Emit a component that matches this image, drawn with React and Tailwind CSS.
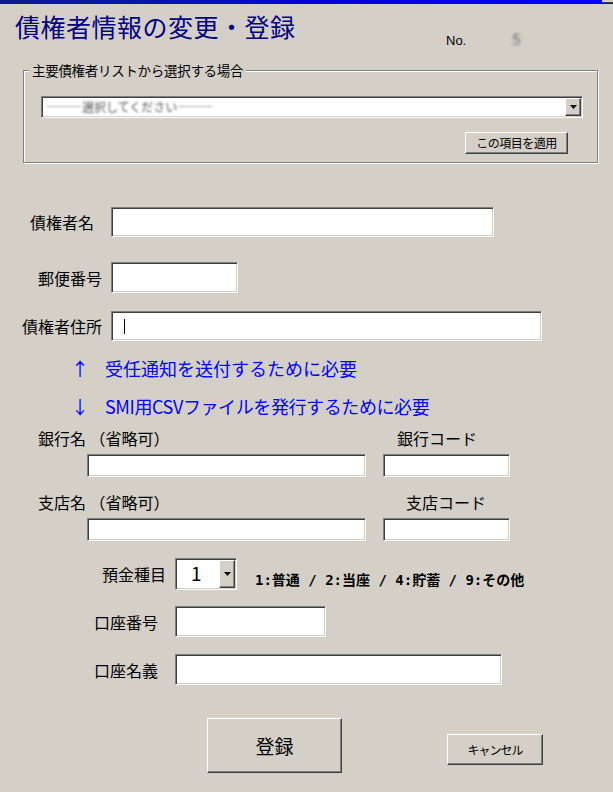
import React from 'react'

const sunken = 'bg-white border border-t-[#808080] border-l-[#808080] border-b-white border-r-white shadow-[inset_1px_1px_0_#404040,inset_-1px_-1px_0_#d4d0c8]'
const raised = 'bg-[#d4d0c8] border border-t-white border-l-white border-b-[#404040] border-r-[#404040] shadow-[inset_-1px_-1px_0_#808080]'

function Field({ className }) {
    return <div className={`${sunken} ${className}`} />
}

function DropButton({ className }) {
    return (
        <div className={`${raised} flex items-center justify-center ${className}`}>
            <svg width="7" height="4" viewBox="0 0 7 4">
                <path d="M0 0h7L3.5 4z" fill="#000" />
            </svg>
        </div>
    )
}

export default function App() {
    return (
        <div className="w-[613px] h-[792px] bg-[#d4d0c8] overflow-hidden text-black font-['Noto_Sans_CJK_JP',sans-serif]">
            {/* window caption edge */}
            <div className="h-[4px] flex bg-linear-to-r from-[#0a1a8a] via-[#0000d8] to-[#0000ff]">
                <div className="ml-auto w-[11px] h-[3px] bg-[#d4d0c8] border-b border-[#404040]" />
            </div>

            <div className="h-[66px] flex items-start">
                <h1 className="ml-[15px] w-[431px] mt-[10px] text-[25px] leading-[25px] text-[#000080] tracking-[0.5px]">
                    債権者情報の変更・登録
                </h1>
                <span className="mt-[30px] text-[13px] leading-[14px] font-['Liberation_Sans',sans-serif]">No.</span>
                <span className="ml-[46px] mt-[24px] text-[15px] text-[#666] blur-[1.5px]">5</span>
            </div>

            {/* group box */}
            <div className="relative ml-[23px] w-[575px] h-[93px] border border-[#808080] shadow-[inset_1px_1px_0_white,1px_1px_0_white]">
                <span className="absolute left-[5px] -top-[10px] px-[3px] bg-[#d4d0c8] text-[13.5px] leading-[18px] tracking-[-0.3px]">
                    主要債権者リストから選択する場合
                </span>
                <div className={`${sunken} mt-[25px] ml-[17px] w-[542px] h-[22px] flex items-center`}>
                    <span className="ml-[4px] text-[12px] text-[#555] blur-[1.3px]">―――選択してください―――</span>
                    <DropButton className="ml-auto mr-[1px] w-[16px] h-[18px]" />
                </div>
                <div className="flex justify-end mt-[14px] mr-[29px]">
                    <button className={`${raised} w-[103px] h-[22px] text-[12px] leading-[12px] tracking-[-0.5px]`}>
                        この項目を適用
                    </button>
                </div>
            </div>

            <div className="mt-[44px] flex items-center">
                <span className="ml-[30px] w-[81px] text-[16px] leading-[16px]">債権者名</span>
                <Field className="w-[383px] h-[30px]" />
            </div>
            <div className="mt-[25px] flex items-center">
                <span className="ml-[38px] w-[73px] text-[16px] leading-[16px]">郵便番号</span>
                <Field className="w-[127px] h-[31px]" />
            </div>
            <div className="mt-[18px] flex items-center">
                <span className="ml-[22px] w-[89px] text-[16px] leading-[16px]">債権者住所</span>
                <div className={`${sunken} w-[431px] h-[30px] flex items-center`}>
                    <div className="ml-[12px] w-px h-[15px] bg-black" />
                </div>
            </div>

            <div className="mt-[18px] flex text-[18px] leading-[18px] text-[#0000ff]">
                <span className="ml-[71px] w-[34px]">↑</span>
                <span>受任通知を送付するために必要</span>
            </div>
            <div className="mt-[20px] flex text-[18px] leading-[18px] text-[#0000ff]">
                <span className="ml-[71px] w-[34px]">↓</span>
                <span className="tracking-[-0.4px]">SMI用CSVファイルを発行するために必要</span>
            </div>

            <div className="mt-[15px] flex text-[16px] leading-[16px]">
                <span className="ml-[38px] w-[359px]">銀行名 （省略可）</span>
                <span>銀行コード</span>
            </div>
            <div className="mt-[8px] flex">
                <Field className="ml-[87px] w-[279px] h-[23px]" />
                <Field className="ml-[17px] w-[127px] h-[23px]" />
            </div>

            <div className="mt-[17px] flex text-[16px] leading-[16px]">
                <span className="ml-[38px] w-[368px]">支店名 （省略可）</span>
                <span>支店コード</span>
            </div>
            <div className="mt-[8px] flex">
                <Field className="ml-[87px] w-[279px] h-[23px]" />
                <Field className="ml-[17px] w-[127px] h-[23px]" />
            </div>

            <div className="mt-[17px] flex items-center">
                <span className="ml-[102px] w-[73px] text-[16px] leading-[16px]">預金種目</span>
                <div className={`${sunken} w-[62px] h-[32px] flex items-center`}>
                    <span className="ml-[15px] text-[19px] leading-[19px] -mt-[3px]">1</span>
                    <DropButton className="ml-auto mr-[1px] w-[16px] h-[28px]" />
                </div>
                <span className="ml-[18px] self-end mb-[2px] text-[14px] leading-[15px] font-bold font-['DejaVu_Sans_Mono','Noto_Sans_CJK_JP',monospace]">
                    1:普通 / 2:当座 / 4:貯蓄 / 9:その他
                </span>
            </div>

            <div className="mt-[16px] flex items-center">
                <span className="ml-[94px] w-[81px] text-[16px] leading-[16px]">口座番号</span>
                <Field className="w-[151px] h-[31px]" />
            </div>
            <div className="mt-[17px] flex items-center">
                <span className="ml-[94px] w-[81px] text-[16px] leading-[16px]">口座名義</span>
                <Field className="w-[327px] h-[31px]" />
            </div>

            <div className="mt-[33px] flex items-start">
                <button className={`${raised} ml-[207px] w-[135px] h-[55px] text-[19px] leading-[19px]`}>
                    登録
                </button>
                <button className={`${raised} ml-[105px] mt-[16px] w-[96px] h-[31px] text-[12px] leading-[12px] tracking-[-1px]`}>
                    キャンセル
                </button>
            </div>
        </div>
    )
}
